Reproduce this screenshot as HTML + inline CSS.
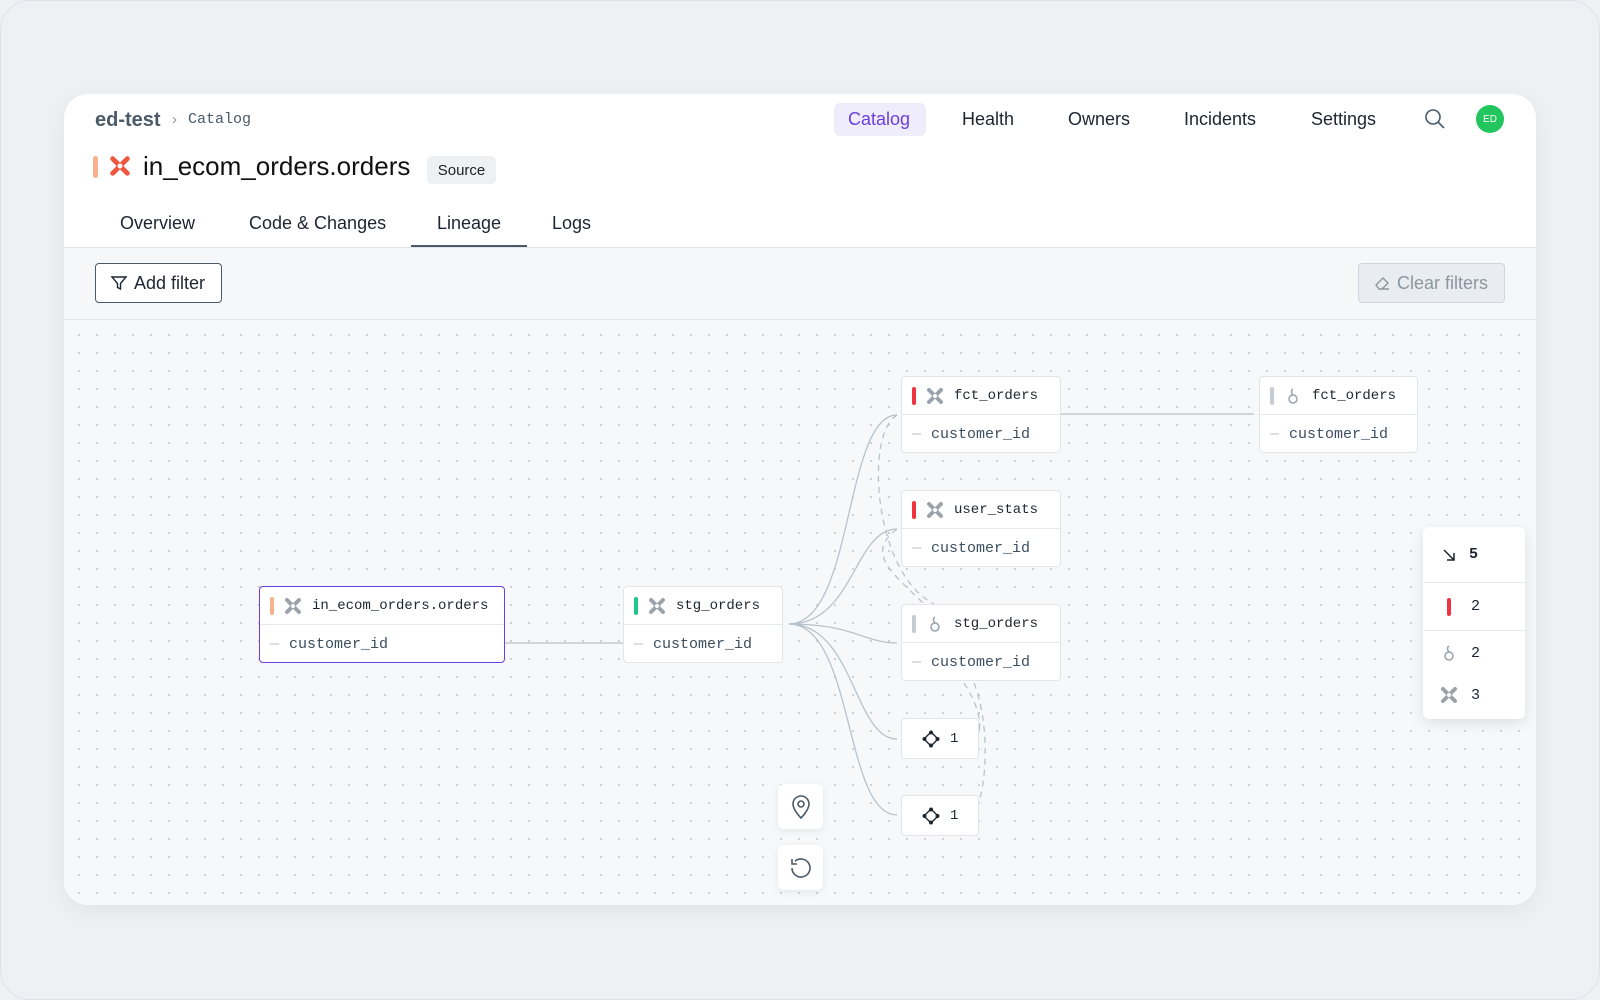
<!DOCTYPE html>
<html><head><meta charset="utf-8"><style>
*{box-sizing:border-box;margin:0;padding:0}
body{width:1600px;height:1000px;background:#eef1f4;font-family:"Liberation Sans",sans-serif;position:relative;overflow:hidden;color:#1d2530}
.frame{position:absolute;left:0;top:0;width:1600px;height:1000px;border:1px solid #dde2e7;border-radius:30px}
.card{position:absolute;left:64px;top:94px;width:1472px;height:811px;background:#fff;border-radius:24px;overflow:hidden;box-shadow:0 6px 24px rgba(0,0,0,.06)}
.abs{position:absolute}
.mono{font-family:"Liberation Mono",monospace}
.canvas{position:absolute;left:0;top:226px;width:1472px;height:585px;background-color:#f7f8fa;background-image:radial-gradient(#c9ced4 1px,transparent 1.2px);background-size:18px 18px;background-position:6px 6px}
.node{position:absolute;background:#fff;border:1px solid #e1e5e9;border-radius:4px;font-family:"Liberation Mono",monospace;font-size:14px}
.node .h{height:38px;border-bottom:1px solid #e6e9ec;display:flex;align-items:center;padding-left:10px;color:#1d2530}
.node .r{height:38px;display:flex;align-items:center;padding-left:10px;color:#3c4f60;font-size:15px}
.bar{width:4px;height:18px;border-radius:2px;margin-right:10px}
.dash{color:#b8c0c8;margin-right:10px}
.ic{margin-right:10px;display:inline-block}
.nav{position:absolute;top:9px;font-size:18px;color:#1d2530}
</style></head><body>
<svg width="0" height="0" style="position:absolute">
 <defs>
  <symbol id="dbt" viewBox="0 0 18 18"><path d="M3 3l12 12M15 3L3 15" stroke="currentColor" stroke-width="4" stroke-linecap="round"/><circle cx="9" cy="9" r="2" fill="#fff"/></symbol>
  <symbol id="ring" viewBox="0 0 18 18" fill="none" stroke="currentColor" stroke-width="1.5"><circle cx="9" cy="12" r="4"/><path d="M9 8C7 6 7 3 9 2"/></symbol>
  <symbol id="dia" viewBox="0 0 18 18" fill="none" stroke="#1d2530" stroke-width="1.4"><path d="M9 2L16 9 9 16 2 9z"/><circle cx="9" cy="2.5" r="1.3"/><circle cx="15.5" cy="9" r="1.3"/><circle cx="9" cy="15.5" r="1.3"/><circle cx="2.5" cy="9" r="1.3"/></symbol>
 </defs>
</svg>
<div class="frame"></div>
<div class="card">
 <div class="abs" style="left:31px;top:15px;font-size:20px;font-weight:bold;color:#4a5a68">ed-test</div>
 <div class="abs" style="left:108px;top:17px;font-size:15px;color:#8a96a0">›</div>
 <div class="abs mono" style="left:124px;top:17px;font-size:15px;color:#4a5a68">Catalog</div>
 <div class="abs" style="left:770px;top:9px;width:92px;height:33px;background:#efedfb;border-radius:6px"></div>
 <div class="nav" style="left:784px;top:15px;color:#6a3fe0">Catalog</div>
 <div class="nav" style="left:898px;top:15px">Health</div>
 <div class="nav" style="left:1004px;top:15px">Owners</div>
 <div class="nav" style="left:1120px;top:15px">Incidents</div>
 <div class="nav" style="left:1247px;top:15px">Settings</div>
 <svg class="abs" style="left:1360px;top:14px" width="22" height="22" viewBox="0 0 22 22" fill="none" stroke="#4a5a68" stroke-width="1.6"><circle cx="9" cy="9" r="7"/><path d="M14 14l6 6"/></svg>
 <div class="abs" style="left:1412px;top:11px;width:28px;height:28px;border-radius:50%;background:#22c55e;color:#fff;font-size:10px;display:flex;align-items:center;justify-content:center">ED</div>
 <div class="abs" style="left:29px;top:62px;width:5px;height:22px;border-radius:3px;background:#f9b08c"></div>
 <svg class="abs" style="left:45px;top:61px;color:#f0553e" width="22" height="22"><use href="#dbt"/></svg>
 <div class="abs" style="left:79px;top:57px;font-size:26px;color:#111">in_ecom_orders.orders</div>
 <div class="abs" style="left:363px;top:62px;width:69px;height:28px;background:#eef1f4;border-radius:5px;font-size:15px;display:flex;align-items:center;justify-content:center;color:#222">Source</div>
 <div class="abs" style="left:56px;top:119px;font-size:18px">Overview</div>
 <div class="abs" style="left:185px;top:119px;font-size:18px">Code &amp; Changes</div>
 <div class="abs" style="left:373px;top:119px;font-size:18px">Lineage</div>
 <div class="abs" style="left:488px;top:119px;font-size:18px">Logs</div>
 <div class="abs" style="left:347px;top:151px;width:116px;height:2px;background:#4a5a68"></div>
 <div class="abs" style="left:0;top:153px;width:1472px;height:73px;background:#f5f7f9;border-top:1px solid #e1e5e9;border-bottom:1px solid #e1e5e9"></div>
 <div class="abs" style="left:31px;top:169px;width:127px;height:40px;border:1px solid #4a5a68;border-radius:4px;background:#fff;display:flex;align-items:center;padding-left:14px;font-size:18px">
  <svg width="18" height="18" viewBox="0 0 18 18" fill="none" stroke="#1d2530" stroke-width="1.4" style="margin-right:6px"><path d="M2 3h14l-5.5 6.5V15l-3-1.5V9.5z"/></svg>Add filter</div>
 <div class="abs" style="left:1294px;top:169px;width:147px;height:40px;border:1px solid #cfd5db;border-radius:4px;background:#e9edf1;display:flex;align-items:center;padding-left:14px;font-size:18px;color:#8a96a0">
  <svg width="18" height="18" viewBox="0 0 18 18" fill="none" stroke="#8a96a0" stroke-width="1.4" style="margin-right:6px"><path d="M7 15h9M3 11l7-7 5 5-6 6H6z"/></svg>Clear filters</div>
 <div class="canvas"></div>
 <svg class="abs" style="left:0;top:0" width="1472" height="811" fill="none" stroke="#b8c2cb" stroke-width="1.3">
  <path d="M441 549H559"/>
  <path d="M725 530C790 530 780 321 833 321"/>
  <path d="M725 530C790 530 790 435 833 435"/>
  <path d="M725 530C790 530 800 549 833 549"/>
  <path d="M725 530C790 530 790 645 833 645"/>
  <path d="M725 530C790 530 780 721 833 721"/>
  <path d="M997 320H1190"/>
  <g stroke-dasharray="6 5"><path d="M833 321C800 340 810 480 870 510"/><path d="M833 435C800 460 830 480 860 510"/><path d="M900 589C920 620 920 645 905 645"/><path d="M910 589C930 640 920 721 905 721"/></g>
 </svg>
 <div class="node" style="left:195px;top:492px;width:246px;height:77px;border:1.5px solid #6a3fe0"><div class="h"><span class="bar" style="background:#f9b08c"></span><svg class="ic" width="18" height="18" style="color:#9aa3ab"><use href="#dbt"/></svg>in_ecom_orders.orders</div><div class="r"><span class="dash">—</span>customer_id</div></div>
 <div class="node" style="left:559px;top:492px;width:160px;height:77px"><div class="h"><span class="bar" style="background:#22c58a"></span><svg class="ic" width="18" height="18" style="color:#9aa3ab"><use href="#dbt"/></svg>stg_orders</div><div class="r"><span class="dash">—</span>customer_id</div></div>
 <div class="node" style="left:837px;top:282px;width:160px;height:77px"><div class="h"><span class="bar" style="background:#ef3340"></span><svg class="ic" width="18" height="18" style="color:#9aa3ab"><use href="#dbt"/></svg>fct_orders</div><div class="r"><span class="dash">—</span>customer_id</div></div>
 <div class="node" style="left:837px;top:396px;width:160px;height:77px"><div class="h"><span class="bar" style="background:#ef3340"></span><svg class="ic" width="18" height="18" style="color:#9aa3ab"><use href="#dbt"/></svg>user_stats</div><div class="r"><span class="dash">—</span>customer_id</div></div>
 <div class="node" style="left:837px;top:510px;width:160px;height:77px"><div class="h"><span class="bar" style="background:#c5ccd3"></span><svg class="ic" width="18" height="18" style="color:#9aa3ab"><use href="#ring"/></svg>stg_orders</div><div class="r"><span class="dash">—</span>customer_id</div></div>
 <div class="node" style="left:1195px;top:282px;width:159px;height:77px"><div class="h"><span class="bar" style="background:#c5ccd3"></span><svg class="ic" width="18" height="18" style="color:#9aa3ab"><use href="#ring"/></svg>fct_orders</div><div class="r"><span class="dash">—</span>customer_id</div></div>
 <div class="node" style="left:837px;top:624px;width:78px;height:41px;display:flex;align-items:center;padding-left:20px"><svg width="18" height="18" style="margin-right:10px"><use href="#dia"/></svg>1</div>
 <div class="node" style="left:837px;top:701px;width:78px;height:41px;display:flex;align-items:center;padding-left:20px"><svg width="18" height="18" style="margin-right:10px"><use href="#dia"/></svg>1</div>
 <div class="abs" style="left:1359px;top:433px;width:102px;height:192px;background:#fff;border-radius:6px;box-shadow:0 4px 14px rgba(0,0,0,.1);font-family:'Liberation Mono',monospace;font-size:15px">
  <div style="height:56px;border-bottom:1px solid #e6e9ec;display:flex;align-items:center;padding-left:18px;font-weight:bold"><svg width="16" height="16" viewBox="0 0 16 16" fill="none" stroke="#1d2530" stroke-width="1.5" style="margin-right:12px"><path d="M3 3l10 10M13 6v7H6"/></svg>5</div>
  <div style="height:48px;border-bottom:1px solid #e6e9ec;display:flex;align-items:center;padding-left:24px"><span style="width:4px;height:18px;background:#ef3340;border-radius:2px;margin-right:20px"></span>2</div>
  <div style="height:44px;display:flex;align-items:center;padding-left:17px"><svg width="18" height="18" style="color:#9aa3ab;margin-right:13px"><use href="#ring"/></svg>2</div>
  <div style="height:40px;display:flex;align-items:center;padding-left:17px"><svg width="18" height="18" style="color:#9aa3ab;margin-right:13px"><use href="#dbt"/></svg>3</div>
 </div>
 <div class="abs" style="left:714px;top:690px;width:45px;height:45px;background:#fff;border-radius:6px;box-shadow:0 2px 8px rgba(0,0,0,.08);display:flex;align-items:center;justify-content:center"><svg width="24" height="26" viewBox="0 0 24 26" fill="none" stroke="#4a5a68" stroke-width="1.6"><path d="M12 24s8-8 8-14a8 8 0 0 0-16 0c0 6 8 14 8 14z"/><circle cx="12" cy="10" r="3"/></svg></div>
 <div class="abs" style="left:714px;top:751px;width:45px;height:45px;background:#fff;border-radius:6px;box-shadow:0 2px 8px rgba(0,0,0,.08);display:flex;align-items:center;justify-content:center"><svg width="26" height="26" viewBox="0 0 26 26" fill="none" stroke="#4a5a68" stroke-width="1.6"><path d="M4 13a9 9 0 1 0 3-6.7"/><path d="M4 4v5h5"/></svg></div>
</div>
</body></html>
